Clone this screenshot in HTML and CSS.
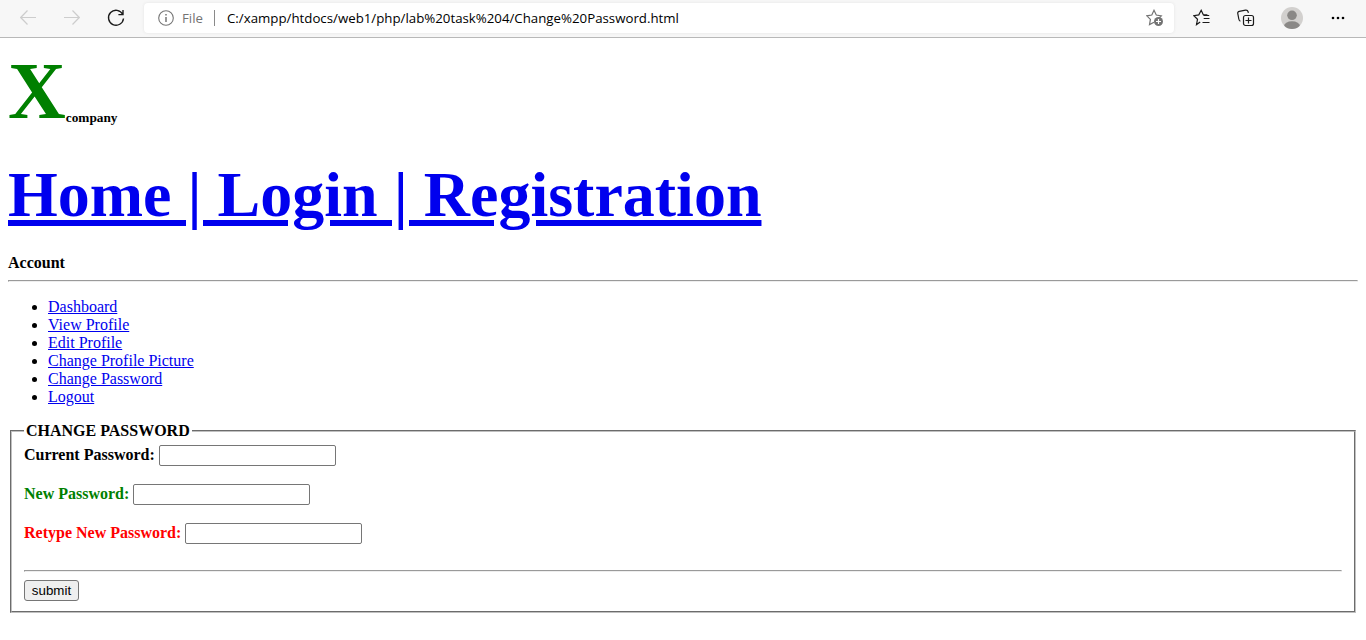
FILE: index.html
```html
<!DOCTYPE html>
<html lang="en">
<head>
<meta charset="utf-8">
<title>Change Password</title>
<link rel="stylesheet" href="styles.css">
</head>
<body>
<header class="toolbar">
  <svg class="icon back" width="16" height="16" viewBox="0 0 16 16"><path d="M16 7.500H.8M7.500.500.7 7.500l6.800 7"/></svg>
  <svg class="icon forward" width="16" height="16" viewBox="0 0 16 16"><path d="M0 7.500h15.200M8.500.500l6.800 7-6.800 7"/></svg>
  <svg class="icon reload" width="18" height="18" viewBox="0 0 18 18"><path d="M15.700 5.300A7.500 7.500 0 1 0 16.500 9.500M16 1v4.600h-4.600"/></svg>
  <div class="address">
    <svg class="icon info" width="16" height="16" viewBox="0 0 16 16"><circle cx="8" cy="8" r="7.300"/><path d="M8 7v5M8 4v1.500" stroke-width="1.500"/></svg>
    <span class="scheme">File</span>
    <span class="divider"></span>
    <span class="url">C:/xampp/htdocs/web1/php/lab%20task%204/Change%20Password.html</span>
    <svg class="icon favorite" width="18" height="18" viewBox="0 0 18 18"><path d="M8 13.200 3.500 15.600l.9-5.200L.8 6.800l5-.8L8 1.300 10.300 6l5 .8-2 2"/><circle cx="12.500" cy="12.500" r="4.500" fill="#737373" stroke="none"/><path d="M12.500 10v5M10 12.500h5" stroke="#fff" stroke-width="1.200"/></svg>
  </div>
  <svg class="icon favorites" width="18" height="18" viewBox="0 0 18 18"><path d="M7.200 13.100 3.500 15.600l1-5.300L.8 6.700l5-.8L8.200 1.300l2.200 4.600h4M10.700 6.500h5.500M10.700 9.500h5.800M9.500 13.500h7"/></svg>
  <svg class="icon collections" width="18" height="18" viewBox="0 0 18 18"><path d="M3.400 12.300C2.300 11.800 2 11 1.800 10L.8 4.700C.5 3.500 1.200 2.600 2.300 2.400L8.500 1.200c1.400-.2 2.300.4 2.700 1.800l.2.800"/><rect x="6.500" y="6.500" width="10" height="10" rx="2"/><path d="M11.500 8.500v6M8.500 11.500h6" stroke-width="1.200"/></svg>
  <svg class="avatar" width="22" height="22" viewBox="0 0 22 22"><clipPath id="disc"><circle cx="11" cy="11" r="11"/></clipPath><g clip-path="url(#disc)"><path fill="#d2d0ce" d="M0 0h22v22H0z"/><circle cx="11" cy="8.300" r="4.800" fill="#8a8886"/><ellipse cx="11" cy="19.300" rx="8" ry="5" fill="#8a8886"/></g></svg>
  <svg class="more" width="14" height="4" viewBox="0 0 14 4"><circle cx="2" cy="2" r="1.300"/><circle cx="7" cy="2" r="1.300"/><circle cx="12" cy="2" r="1.300"/></svg>
</header>
<main class="page">
  <div class="brand"><span class="brand-mark">X</span><span class="brand-name">company</span></div>
  <h1 class="nav"><a class="nav-link" href="#">Home | Login | Registration</a></h1>
  <div class="account">Account</div>
  <hr class="rule">
  <ul class="menu">
    <li><a href="#">Dashboard</a></li>
    <li><a href="#">View Profile</a></li>
    <li><a href="#">Edit Profile</a></li>
    <li><a href="#">Change Profile Picture</a></li>
    <li><a href="#">Change Password</a></li>
    <li><a href="#">Logout</a></li>
  </ul>
  <form>
    <fieldset class="panel">
      <legend class="panel-title">CHANGE PASSWORD</legend>
      <div class="field"><label class="label current" for="current">Current Password:</label><input class="input" id="current" type="password"></div>
      <div class="field"><label class="label new" for="new">New Password:</label><input class="input" id="new" type="password"></div>
      <div class="field"><label class="label retype" for="retype">Retype New Password:</label><input class="input" id="retype" type="password"></div>
      <hr class="rule">
      <button class="submit" type="button">submit</button>
    </fieldset>
  </form>
</main>
</body>
</html>
```
FILE: styles.css
```css
* { box-sizing: border-box; }
body {
  margin: 0;
  background: #fff;
  color: #000;
  font: 16px/18px "Liberation Serif", "Times New Roman", serif;
}
.toolbar {
  display: flex;
  align-items: center;
  height: 38px;
  padding: 0 20px 2px;
  background: #f7f7f7;
  border-bottom: 1px solid #b8b8b8;
  font: 13.27px/18px "Open Sans", "Noto Sans", sans-serif;
}
.icon { flex: none; fill: none; stroke: #1b1b1b; stroke-width: 1.2; }
.back, .forward { stroke: #cdcdcd; }
.forward { margin-left: 28px; }
.reload { margin-left: 27px; stroke-width: 1.4; }
.address {
  display: flex;
  flex: none;
  align-items: center;
  width: 1030px;
  height: 30px;
  margin-left: 19px;
  padding: 0 10px 0 14px;
  background: #fff;
  border-radius: 4px;
  box-shadow: 0 0 3px #e2e2e2;
}
.info { stroke: #767676; stroke-width: 1.1; }
.scheme { width: 32px; margin-left: 8px; color: #737373; }
.divider { width: 1px; height: 16px; background: #8a8a8a; }
.url { margin-left: 12px; white-space: nowrap; }
.favorite { margin-left: auto; stroke: #737373; }
.favorites { margin-left: 19px; }
.collections { margin-left: 26px; }
.avatar { flex: none; margin-left: 26px; }
.more { flex: none; margin-left: 28px; }
.page { padding: 0 8px; }
.brand { height: 110px; line-height: 106px; font-weight: bold; }
.brand-mark { color: green; font-size: 80px; }
.brand-name { font-size: 13.3px; line-height: 1; vertical-align: -4px; }
.nav { height: 104px; margin: 0; font-size: 64px; line-height: 94px; white-space: nowrap; }
.nav-link { color: #00e; text-decoration-thickness: 6px; text-underline-offset: 4px; }
.account { height: 28px; padding-top: 2px; font-weight: bold; }
.rule {
  height: 2px;
  margin: 0;
  border: 1px solid;
  border-color: #9a9a9a #eee #eee #9a9a9a;
}
.menu { margin: 16px 0; padding-left: 40px; }
.menu a { color: #00e; }
.panel {
  height: 191px;
  margin: 0 2px;
  padding: 5px 12px 10px;
  border: 2px groove #c0c0c0;
}
.panel-title { height: 18px; padding: 0 2px; font-weight: bold; }
.field { display: flex; gap: 4px; height: 39px; }
.label { height: 21px; line-height: 19px; font-weight: bold; }
.new { color: green; }
.retype { color: red; }
.input {
  width: 177px;
  height: 21px;
  padding: 1px 2px;
  border: 1px solid #767676;
  border-radius: 2px;
}
.panel .rule { margin: 8px 0; }
.submit {
  display: block;
  width: 55px;
  height: 21px;
  padding: 0;
  background: #efefef;
  border: 1px solid #767676;
  border-radius: 3px;
  color: #000;
  font: 13.333px "Liberation Sans", Arial, sans-serif;
}
```
